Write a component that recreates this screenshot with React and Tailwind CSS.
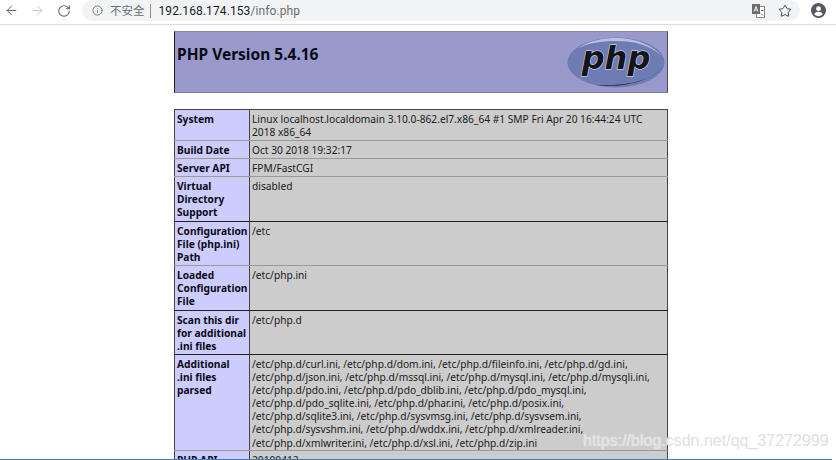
import React from 'react';
import { ArrowLeft, ArrowRight, RotateCw, Info, Star } from 'lucide-react';

const rows = [
  { label: 'System', value: 'Linux localhost.localdomain 3.10.0-862.el7.x86_64 #1 SMP Fri Apr 20 16:44:24 UTC 2018 x86_64', h: 'h-[31px]', line: 'border-b-[#9a9a9a]' },
  { label: 'Build Date', value: 'Oct 30 2018 19:32:17', h: 'h-[18px]', line: 'border-b-[#9a9a9a]' },
  { label: 'Server API', value: 'FPM/FastCGI', h: 'h-[18px]', line: 'border-b-[#9a9a9a]' },
  { label: 'Virtual Directory Support', value: 'disabled', h: 'h-[45px]', line: 'border-b-[#222222]' },
  { label: 'Configuration File (php.ini) Path', value: '/etc', h: 'h-[44px]', line: 'border-b-[#9a9a9a]' },
  { label: 'Loaded Configuration File', value: '/etc/php.ini', h: 'h-[45px]', line: 'border-b-[#222222]' },
  { label: 'Scan this dir for additional .ini files', value: '/etc/php.d', h: 'h-[44px]', line: 'border-b-[#222222]' },
  {
    label: 'Additional .ini files parsed',
    value:
      '/etc/php.d/curl.ini, /etc/php.d/dom.ini, /etc/php.d/fileinfo.ini, /etc/php.d/gd.ini, /etc/php.d/json.ini, /etc/php.d/mssql.ini, /etc/php.d/mysql.ini, /etc/php.d/mysqli.ini, /etc/php.d/pdo.ini, /etc/php.d/pdo_dblib.ini, /etc/php.d/pdo_mysql.ini, /etc/php.d/pdo_sqlite.ini, /etc/php.d/phar.ini, /etc/php.d/posix.ini, /etc/php.d/sqlite3.ini, /etc/php.d/sysvmsg.ini, /etc/php.d/sysvsem.ini, /etc/php.d/sysvshm.ini, /etc/php.d/wddx.ini, /etc/php.d/xmlreader.ini, /etc/php.d/xmlwriter.ini, /etc/php.d/xsl.ini, /etc/php.d/zip.ini',
    h: 'h-[96px]',
    line: 'border-b-[#9a9a9a]',
  },
  { label: 'PHP API', value: '20100412', h: 'h-[18px]', line: 'border-b-[#9a9a9a]' },
];

function TranslateIcon() {
  return (
    <svg width="13" height="14" viewBox="0 0 13 14">
      <rect x="4.5" y="2.5" width="8" height="11" fill="#fff" stroke="#8a8a8a" strokeWidth="1" />
      <rect x="0" y="0" width="8" height="10" fill="#6b6b6b" />
      <path d="M2 7.5 4 2.5l2 5M2.8 6h2.4" stroke="#fff" strokeWidth="0.9" fill="none" />
      <path d="M9 6.5h2.5M9 9.5l2 2" stroke="#666" strokeWidth="1" fill="none" />
    </svg>
  );
}

function AccountIcon() {
  return (
    <svg width="15" height="15" viewBox="0 0 16 16">
      <circle cx="8" cy="8" r="8" fill="#555a60" />
      <circle cx="8" cy="6" r="2.6" fill="#fff" />
      <path d="M3.4 11.8c1-1.8 2.9-2.4 4.6-2.4s3.6.6 4.6 2.4c-1 1.4-2.7 2.3-4.6 2.3s-3.6-.9-4.6-2.3z" fill="#fff" />
    </svg>
  );
}

function PhpLogo() {
  return (
    <svg width="98" height="51" viewBox="0 0 98 51">
      <ellipse cx="49" cy="25.5" rx="48.5" ry="25" fill="#6f7bb3" />
      <path d="M10 12C22 3 38 1 49 1c20 0 36 7 46 18C83 8 67 4 49 4 35 4 20 6 10 12z" fill="#b9bfdc" />
      <path d="M28 48c30 4 64-6 69-22-4 14-30 24-69 22z" fill="#23243a" />
      <text x="49" y="32" textAnchor="middle" fontFamily="'DejaVu Sans', sans-serif" fontSize="32" fontWeight="700" fontStyle="italic" fill="#14141c" stroke="#e8e8f2" strokeWidth="1" paintOrder="stroke">php</text>
    </svg>
  );
}

function App() {
  return (
    <div className="relative h-[460px] w-[836px] overflow-hidden bg-white font-['Noto_Sans',sans-serif]">
      <div className="flex h-[25px] items-center border-b border-[#d9dadc] bg-white pb-[3px]">
        <div className="flex w-[82px] items-center gap-[11px] pl-[4px] text-[#5f6368]">
          <ArrowLeft size={15} strokeWidth={1.6} />
          <ArrowRight size={15} strokeWidth={1.4} className="text-[#bcbec2]" />
          <RotateCw size={14} strokeWidth={1.8} className="ml-[1px]" />
        </div>
        <div className="flex h-[21px] w-[718px] items-center rounded-full bg-[#f1f3f4] pr-[8px] pl-[10px]">
          <Info size={11} strokeWidth={1.8} className="text-[#5f6368]" />
          <span className="ml-[7px] font-['Noto_Sans_CJK_SC',sans-serif] text-[11.5px] text-[#6a6d71]">不安全</span>
          <span className="ml-[5px] h-[14px] w-px bg-[#8a8d91]" />
          <span className="ml-[8px] font-['Roboto',sans-serif] text-[12px] tracking-[0.1px] text-[#202124]">
            192.168.174.153<span className="text-[#6a6d71]">/info.php</span>
          </span>
          <div className="ml-auto flex items-center gap-[13px]">
            <TranslateIcon />
            <Star size={14} strokeWidth={1.7} className="text-[#43464a]" />
          </div>
        </div>
        <div className="ml-[11px]">
          <AccountIcon />
        </div>
      </div>

      <div className="mt-[6px] ml-[174px] flex h-[62px] w-[494px] items-center justify-between border border-t-[#8b8b8b] border-r-[#4b4b5c] border-b-[#808080] border-l-[#222] bg-[#9999cc] pr-[2px]">
        <h1 className="mb-[16px] pl-[2px] text-[15.5px] leading-5 font-bold text-[#0a0a14]">PHP Version 5.4.16</h1>
        <PhpLogo />
      </div>

      <table className="mt-[16px] ml-[174px] w-[494px] table-fixed border-collapse text-[10.2px] leading-[13.1px] text-[#1a1a1a]">
        <colgroup>
          <col className="w-[75px]" />
          <col />
        </colgroup>
        <tbody>
          {rows.map((r) => (
            <tr key={r.label} className={r.h}>
              <td className={`border border-[#444444] ${r.line} bg-[#ccccff] px-[2px] pt-[3px] align-top font-bold text-[#0a0a14]`}>{r.label}</td>
              <td className={`border border-[#444444] ${r.line} bg-[#cccccc] px-[2px] pt-[3px] align-top`}>{r.value}</td>
            </tr>
          ))}
        </tbody>
      </table>

      <div className="absolute bottom-0 left-0 h-px w-[832px] bg-[#3f7fb8]" />
      <div className="absolute top-[431px] left-[583px] font-['Liberation_Sans',sans-serif] text-[16px] leading-5 text-[#e0e0e0] [text-shadow:0_0_1px_#ffffff]">
        https://blog.csdn.net/qq_37272999
      </div>
    </div>
  );
}

export default App;
